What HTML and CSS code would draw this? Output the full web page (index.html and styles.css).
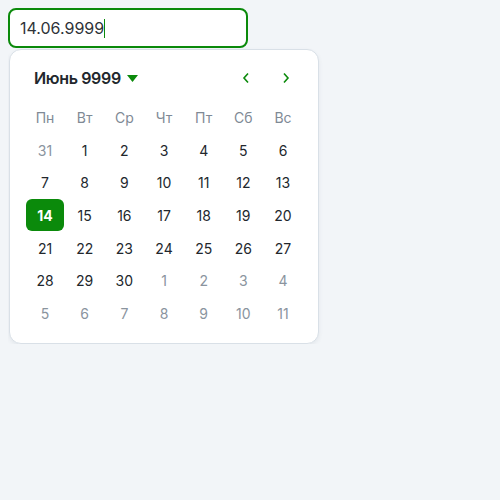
FILE: index.html
```html
<!DOCTYPE html>
<html lang="ru">
<head>
<meta charset="utf-8">
<link rel="stylesheet" href="styles.css">
</head>
<body>
<div class="field"><span class="value">14.06.9999</span><span class="caret"></span></div>
<div class="popup">
  <div class="head">
    <div class="month">Июнь 9999<svg class="tri" width="11" height="7" viewBox="0 0 11 7"><path d="M0 0H11L5.5 7Z" fill="#0b8a0b"/></svg></div>
    <div class="navs">
      <div class="nav"><svg width="8" height="12" viewBox="0 0 8 12"><path d="M6 1.5L2 6L6 10.5" fill="none" stroke="#0b8a0b" stroke-width="1.6"/></svg></div>
      <div class="nav"><svg width="8" height="12" viewBox="0 0 8 12"><path d="M2 1.5L6 6L2 10.5" fill="none" stroke="#0b8a0b" stroke-width="1.6"/></svg></div>
    </div>
  </div>
  <div class="grid">
    <div class="wd">Пн</div><div class="wd">Вт</div><div class="wd">Ср</div><div class="wd">Чт</div><div class="wd">Пт</div><div class="wd">Сб</div><div class="wd">Вс</div>
    <div class="d out">31</div><div class="d">1</div><div class="d">2</div><div class="d">3</div><div class="d">4</div><div class="d">5</div><div class="d">6</div>
    <div class="d">7</div><div class="d">8</div><div class="d">9</div><div class="d">10</div><div class="d">11</div><div class="d">12</div><div class="d">13</div>
    <div class="d sel">14</div><div class="d">15</div><div class="d">16</div><div class="d">17</div><div class="d">18</div><div class="d">19</div><div class="d">20</div>
    <div class="d">21</div><div class="d">22</div><div class="d">23</div><div class="d">24</div><div class="d">25</div><div class="d">26</div><div class="d">27</div>
    <div class="d">28</div><div class="d">29</div><div class="d">30</div><div class="d out">1</div><div class="d out">2</div><div class="d out">3</div><div class="d out">4</div>
    <div class="d out">5</div><div class="d out">6</div><div class="d out">7</div><div class="d out">8</div><div class="d out">9</div><div class="d out">10</div><div class="d out">11</div>
  </div>
</div>
</body>
</html>
```
FILE: styles.css
```css
* { box-sizing: border-box; }
html, body { background: #f2f5f8; }
body {
  margin: 8px;
  font-family: Inter, "Noto Sans", sans-serif;
  color: #22272d;
}
.field {
  width: 240px;
  height: 40px;
  border: 2px solid #0b8a0b;
  border-radius: 8px;
  background: #fff;
  display: flex;
  align-items: center;
  padding-left: 10px;
  font-size: 16px;
  color: #2e3338;
}
.caret {
  width: 1px;
  height: 19px;
  background: #0b8a0b;
}
.popup {
  margin: 1px 0 0 1px;
  width: 310px;
  background: #fff;
  border: 1px solid #d9e0e7;
  border-radius: 12px;
  box-shadow: 0 2px 4px rgba(60, 80, 100, 0.08);
  padding: 16px 16px 13px;
}
.head {
  height: 24px;
  display: flex;
  align-items: center;
  justify-content: space-between;
}
.month {
  padding-left: 8px;
  font-size: 16px;
  font-weight: 600;
  letter-spacing: -0.35px;
  color: #22272d;
  display: flex;
  align-items: center;
  gap: 6px;
}
.tri { margin-top: 1px; }
.navs { display: flex; gap: 8px; }
.nav {
  width: 32px;
  height: 24px;
  display: flex;
  align-items: center;
  justify-content: center;
}
.grid {
  margin-top: 11px;
  display: grid;
  grid-template-columns: repeat(7, 1fr);
  column-gap: 1.6px;
  grid-template-rows: 33px;
  grid-auto-rows: 32.7px;
  font-size: 14px;
}
.wd, .d {
  display: flex;
  align-items: center;
  justify-content: center;
}
.wd { color: #7f8a95; height: 32px; }
.d { height: 32px; color: #22272d; border-radius: 6px; }
.d.out { color: #8a949e; }
.d.sel { background: #0b8a0b; color: #fff; font-weight: 700; }
```
